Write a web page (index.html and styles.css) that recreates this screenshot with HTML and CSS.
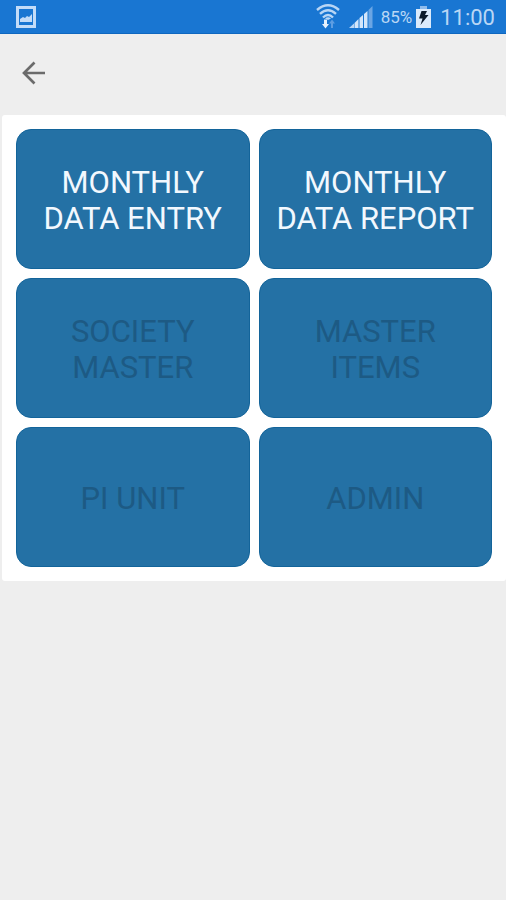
FILE: index.html
```html
<!DOCTYPE html>
<html lang="en">
<head>
    <meta charset="UTF-8">
    <meta name="viewport" content="width=device-width, initial-scale=1.0">
    <title>Monthly Data</title>
    <link rel="stylesheet" href="styles.css">
</head>
<body>
    <!-- Phone status bar -->
    <div class="status-bar">
        <svg class="picture-icon" width="20" height="22" viewBox="0 0 20 22" aria-hidden="true">
            <rect x="1.500" y="1.500" width="17" height="19" fill="none" stroke="#c3dcf8" stroke-width="3"/>
            <path d="M4 16v-3l3-2 2 1 2-2 2 1 3-3v8z" fill="#c3dcf8"/>
        </svg>
        <div class="status-right">
            <!-- Wifi with the transfer arrows -->
            <svg class="wifi-icon" width="24" height="26" viewBox="0 0 24 26" aria-hidden="true">
                <g fill="none" stroke="#b9d6f5" stroke-width="2.4">
                    <path d="M1 6Q12-3.500 23 6"/>
                    <path d="M4 9.800Q12 2.500 20 9.800"/>
                    <path d="M7 13.500Q12 8.500 17 13.500"/>
                </g>
                <path d="M9 14.500Q12 12 15 14.500L12 16z" fill="#b9d6f5"/>
                <path d="M8 15.500h3V20h2l-3.500 4.500L6 20h2z" fill="#e6f1fd"/>
                <path d="M16 15.500l3 4h-2V24h-2v-4.500h-2z" fill="#5d9de2"/>
            </svg>
            <!-- Signal bars -->
            <svg class="signal-icon" width="24" height="22" viewBox="0 0 24 22" aria-hidden="true">
                <path d="M0 22L5 17.500V22z" fill="#b9d6f5"/>
                <path d="M5.500 17L9.500 13V22h-4z" fill="#d3e6fb"/>
                <path d="M10.500 12L14 9V22h-3.500z" fill="#d3e6fb"/>
                <path d="M15 8L18.500 5V22H15z" fill="#d3e6fb"/>
                <path d="M19.500 4L23.500 0V22h-4z" fill="#6aa5e4"/>
            </svg>
            <span class="battery-level">85%</span>
            <!-- Battery, charging -->
            <svg class="battery-icon" width="15" height="22" viewBox="0 0 15 22" aria-hidden="true">
                <path d="M4 0h7v3H4z" fill="#8fbcec"/>
                <path d="M0 3h15v19H0z" fill="#dbeafb"/>
                <path d="M5.500 5h5.500l-2 4h3.500L4.500 19l2-6.500H3z" fill="#0b1a2c"/>
            </svg>
            <span class="clock">11:00</span>
        </div>
    </div>

    <!-- Toolbar with the back arrow -->
    <header class="toolbar">
        <button type="button" class="back-button" aria-label="Back">
            <svg width="24" height="24" viewBox="0 0 24 24" aria-hidden="true">
                <path d="M23 12H2.500M12.500 1.500L2 12l10.500 10.500" fill="none" stroke="#6b6b6b" stroke-width="2.7"/>
            </svg>
        </button>
    </header>

    <!-- Main menu -->
    <main class="menu-card">
        <button type="button" class="tile">MONTHLY<br>DATA ENTRY</button>
        <button type="button" class="tile">MONTHLY<br>DATA REPORT</button>
        <button type="button" class="tile" disabled>SOCIETY<br>MASTER</button>
        <button type="button" class="tile" disabled>MASTER<br>ITEMS</button>
        <button type="button" class="tile" disabled>PI UNIT</button>
        <button type="button" class="tile" disabled>ADMIN</button>
    </main>
</body>
</html>
```

FILE: styles.css
```css
* {
    box-sizing: border-box;
}

body {
    margin: 0;
    min-height: 100vh;
    background-color: #eeeeee;
    font-family: Roboto, "Liberation Sans", sans-serif;
}

/* Status bar */
.status-bar {
    display: flex;
    justify-content: space-between;
    align-items: center;
    height: 34px;
    padding: 1px 11px 0 16px;
    background-color: #1976d2;
    border-bottom: 1px solid #0f67bf;
    color: #b9d6f5;
}

.status-right {
    display: flex;
    align-items: center;
}

.signal-icon {
    margin-left: 9px;
}

.battery-level {
    margin-left: 8px;
    font-size: 17px;
}

.battery-icon {
    margin-left: 4px;
}

.clock {
    margin-left: 9px;
    font-size: 22px;
}

/* Toolbar */
.toolbar {
    display: flex;
    align-items: center;
    height: 81px;
    padding: 0 14px 4px;
}

.back-button {
    display: flex;
    padding: 8px;
    border: none;
    background: none;
    cursor: pointer;
}

/* White card that holds the tiles */
.menu-card {
    display: grid;
    grid-template-columns: 1fr 1fr;
    grid-auto-rows: 140px;
    gap: 9px;
    margin: 0 0 0 2px;
    padding: 14px;
    background-color: #ffffff;
    border-radius: 3px;
}

.tile {
    padding: 3px 0 0;
    border: 1px solid #13649a;
    border-radius: 15px;
    background-color: #2471a5;
    color: #f2f8fe;
    font-family: inherit;
    font-size: 31px;
    line-height: 36px;
    cursor: pointer;
}

.tile:disabled {
    color: #1d5a84;
    cursor: default;
}
```
